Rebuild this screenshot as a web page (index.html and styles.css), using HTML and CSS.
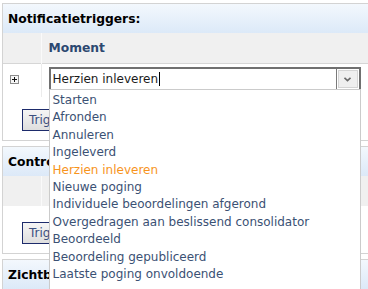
FILE: index.html
```html
<!DOCTYPE html>
<html lang="nl">
<head>
<meta charset="utf-8">
<title>Notificatietriggers</title>
<link rel="stylesheet" href="styles.css">
</head>
<body>
<div class="page">
  <section class="panel">
    <div class="panel-head">Notificatietriggers:</div>
    <table class="grid">
      <colgroup><col class="col-1"><col></colgroup>
      <thead>
        <tr><th class="c1"></th><th class="c2">Moment</th></tr>
      </thead>
      <tbody>
        <tr>
          <td class="c1">
            <svg class="expand" width="9" height="9" viewBox="0 0 9 9"><rect x="0.5" y="0.5" width="8" height="8" fill="#f6f6f6" stroke="#8c8c8c"/><path d="M2 4.5h5M4.5 2v5" stroke="#111" stroke-width="1"/></svg>
          </td>
          <td class="c2">
            <div class="combo">
              <div class="combo-text">Herzien inleveren<span class="caret"></span></div>
              <div class="combo-btn"><span class="combo-btn-inner"><svg width="7" height="5" viewBox="0 0 7 5"><path d="M0.5 0.8 3.5 3.6 6.5 0.8" fill="none" stroke="#6a6a6a" stroke-width="1.6"/></svg></span></div>
              <ul class="dropdown">
                <li>Starten</li>
                <li>Afronden</li>
                <li>Annuleren</li>
                <li>Ingeleverd</li>
                <li class="active">Herzien inleveren</li>
                <li>Nieuwe poging</li>
                <li>Individuele beoordelingen afgerond</li>
                <li>Overgedragen aan beslissend consolidator</li>
                <li>Beoordeeld</li>
                <li>Beoordeling gepubliceerd</li>
                <li>Laatste poging onvoldoende</li>
              </ul>
            </div>
          </td>
        </tr>
      </tbody>
    </table>
    <div class="actions"><button class="btn" type="button">Trigger toevoegen</button></div>
  </section>

  <section class="panel">
    <div class="panel-head">Controlelijst:</div>
    <table class="grid">
      <colgroup><col class="col-1"><col></colgroup>
      <thead>
        <tr><th class="c1"></th><th class="c2">Item</th></tr>
      </thead>
    </table>
    <div class="actions actions-empty"><button class="btn" type="button">Trigger toevoegen</button></div>
  </section>

  <section class="panel">
    <div class="panel-head">Zichtbaarheid:</div>
  </section>
</div>
</body>
</html>
```
FILE: styles.css
```css
html, body {
  margin: 0;
  padding: 0;
  background: #fff;
}
body {
  width: 368px;
  height: 289px;
  overflow: hidden;
  font-family: "DejaVu Sans", Verdana, sans-serif;
  font-size: 12px;
  color: #000;
}
.page {
  padding: 3px 0 0 2px;
  display: flex;
  flex-direction: column;
  gap: 5px;
}
.panel {
  width: 400px;
  border: 1px solid #d3d3d3;
  background: #fff;
}
.panel-head {
  height: 29px;
  line-height: 31px;
  padding-left: 5px;
  font-weight: bold;
  font-size: 12.3px;
  background: linear-gradient(#f3f8fd, #dce9f8);
}
.grid {
  border-collapse: collapse;
  table-layout: fixed;
  width: 100%;
}
.col-1 {
  width: 38px;
}
.grid th {
  height: 30px;
  padding: 0;
  background: #f0f0f0;
  text-align: left;
  color: #2c4870;
  font-weight: bold;
  font-size: 12.3px;
}
.grid th.c1 {
  border-right: 1px solid #fafafa;
}
.grid th.c2 {
  padding-left: 7px;
}
.grid td {
  border-top: 1px solid #d6d6d6;
  padding: 0;
  vertical-align: top;
}
.grid td.c1 {
  border-right: 1px solid #ececec;
  padding-left: 7px;
}
.expand {
  display: block;
  margin-top: 11px;
}
.grid td.c2 {
  padding: 3px 0 6px 7px;
}
.combo {
  position: relative;
  width: 312px;
  height: 24px;
  box-sizing: border-box;
  border: 2px solid #707070;
  display: flex;
  background: #fff;
}
.combo-text {
  flex: 1;
  padding-left: 2px;
  line-height: 20px;
  color: #1a1a1a;
  display: flex;
  align-items: center;
}
.caret {
  display: inline-block;
  width: 1px;
  height: 14px;
  background: #000;
  margin-left: 1px;
}
.combo-btn {
  width: 20px;
  border-left: 1px solid #7a7a7a;
  display: flex;
  padding: 1px;
}
.combo-btn-inner {
  flex: 1;
  border: 1px solid #d4d4d4;
  background: #efefef;
  display: flex;
  align-items: center;
  justify-content: center;
}
.dropdown {
  position: absolute;
  top: 100%;
  left: -2px;
  width: 312px;
  box-sizing: border-box;
  margin: 0;
  padding: 2px 0 8px 0;
  list-style: none;
  background: #fff;
  border: 1px solid #cbcbcb;
  z-index: 10;
}
.dropdown li {
  line-height: 17.4px;
  padding-left: 3px;
  color: #3b5174;
  white-space: nowrap;
}
.dropdown li.active {
  color: #f7941d;
}
.actions {
  padding: 12px 0 9px 19px;
}
.actions-empty {
  padding-top: 16px;
}
.btn {
  display: block;
  height: 22px;
  padding: 0 6px;
  border: 1px solid #1d2b6b;
  background: linear-gradient(#f5f5f5, #dedede);
  color: #3c5080;
  font-family: "DejaVu Sans", Verdana, sans-serif;
  font-size: 12px;
}
```
